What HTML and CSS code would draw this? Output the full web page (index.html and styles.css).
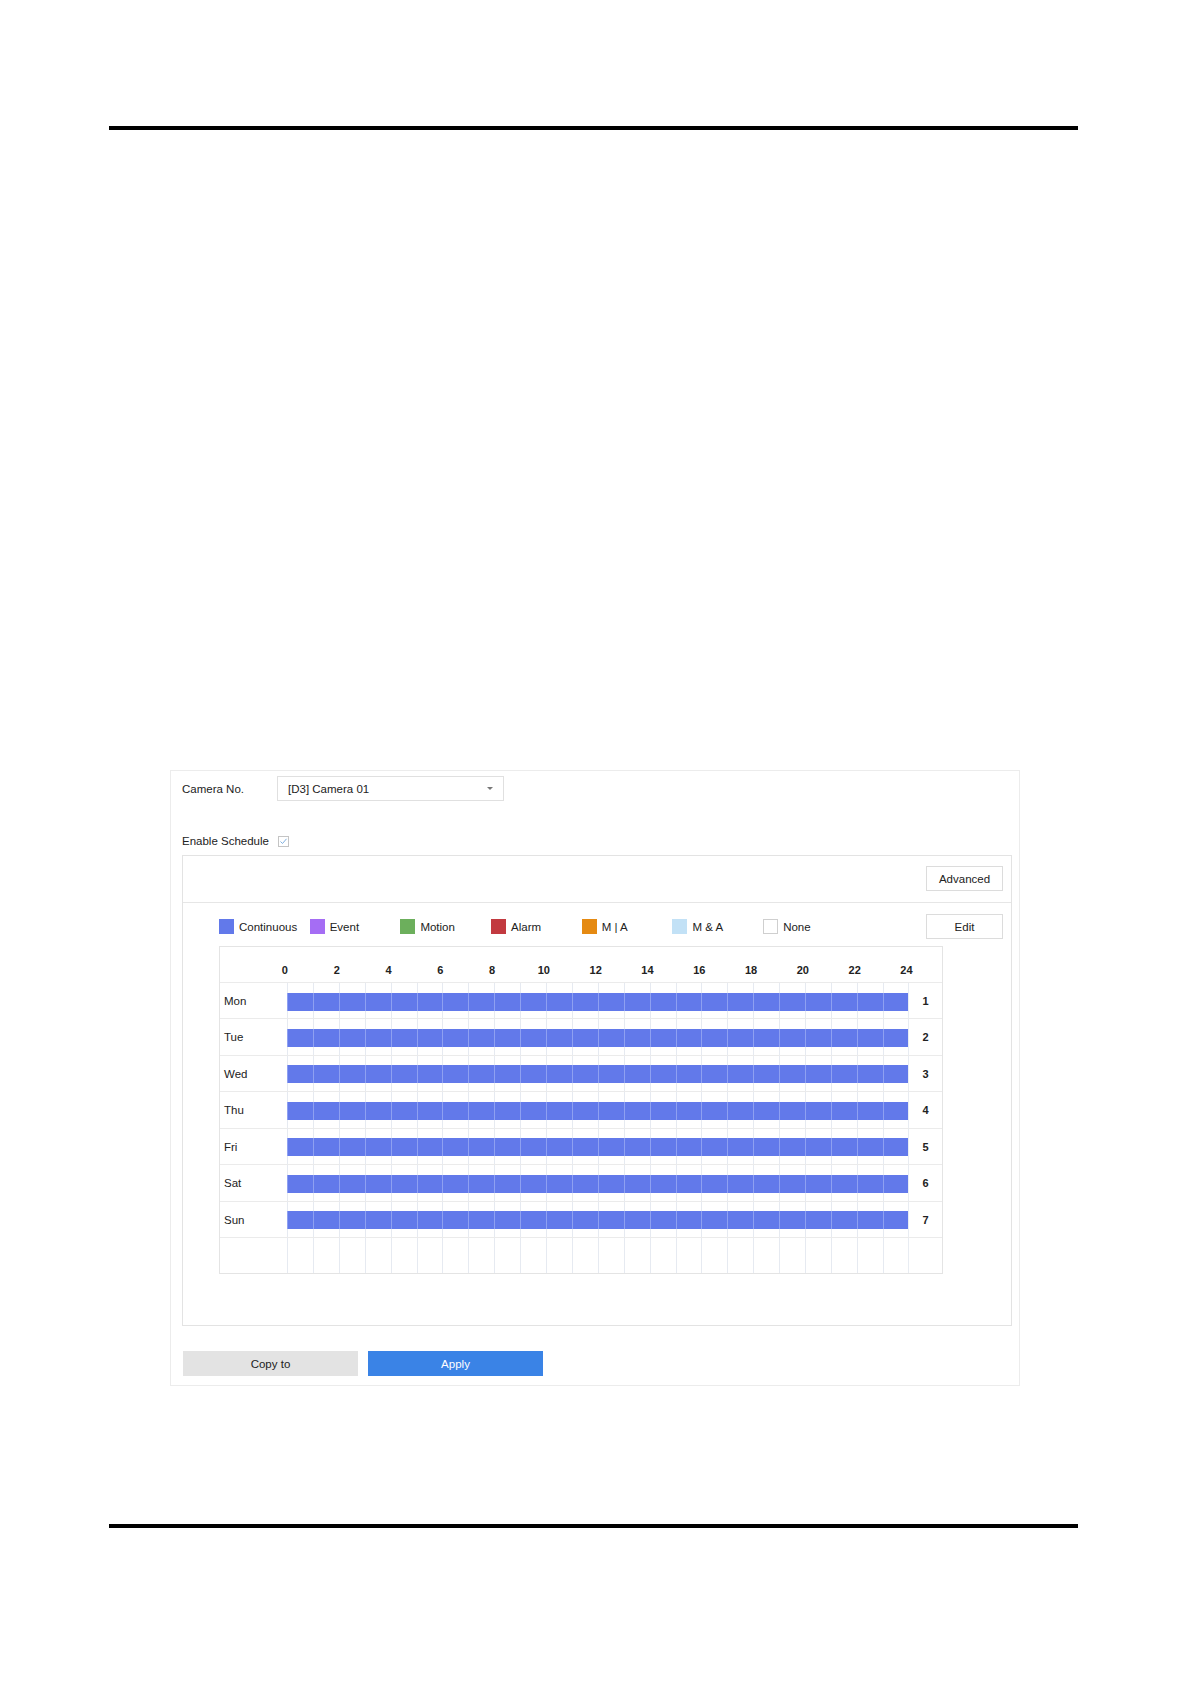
FILE: index.html
```html
<!DOCTYPE html>
<html lang="en">
<head>
<meta charset="UTF-8" />
<title>Record Schedule</title>
<link rel="stylesheet" href="styles.css">
</head>
<body>

<div class="page">
  <div class="rule"></div>

  <div class="panel">
    <div class="cam-row">
      <span class="cam-label">Camera No.</span>
      <div class="select">
        <span>[D3] Camera 01</span>
        <span class="caret"></span>
      </div>
    </div>

    <div class="enable-row">
      <span>Enable Schedule</span>
      <svg class="check" width="11" height="11" viewBox="0 0 11 11">
        <rect x="0.5" y="0.5" width="10" height="10" fill="#fff" stroke="#c4c4c4"/>
        <path d="M2.5 5.5 L4.5 7.5 L8.5 2.8" fill="none" stroke="#7fb0e0" stroke-width="1"/>
      </svg>
    </div>

    <div class="box">
      <div class="box-top">
        <button class="btn">Advanced</button>
      </div>

      <div class="legend-row">
        <div class="legend">
          <div class="lg"><i class="sw c-cont"></i>Continuous</div>
          <div class="lg"><i class="sw c-event"></i>Event</div>
          <div class="lg"><i class="sw c-motion"></i>Motion</div>
          <div class="lg"><i class="sw c-alarm"></i>Alarm</div>
          <div class="lg"><i class="sw c-mora"></i>M | A</div>
          <div class="lg"><i class="sw c-mand"></i>M &amp; A</div>
          <div class="lg"><i class="sw c-none"></i>None</div>
        </div>
        <button class="btn">Edit</button>
      </div>

      <div class="sched">
        <div class="sched-head">
          <span>0</span><span>2</span><span>4</span><span>6</span><span>8</span><span>10</span><span>12</span>
          <span>14</span><span>16</span><span>18</span><span>20</span><span>22</span><span>24</span>
        </div>
        <div class="srow"><div class="day">Mon</div><div class="track"><div class="bar"></div></div><div class="num">1</div></div>
        <div class="srow"><div class="day">Tue</div><div class="track"><div class="bar"></div></div><div class="num">2</div></div>
        <div class="srow"><div class="day">Wed</div><div class="track"><div class="bar"></div></div><div class="num">3</div></div>
        <div class="srow"><div class="day">Thu</div><div class="track"><div class="bar"></div></div><div class="num">4</div></div>
        <div class="srow"><div class="day">Fri</div><div class="track"><div class="bar"></div></div><div class="num">5</div></div>
        <div class="srow"><div class="day">Sat</div><div class="track"><div class="bar"></div></div><div class="num">6</div></div>
        <div class="srow"><div class="day">Sun</div><div class="track"><div class="bar"></div></div><div class="num">7</div></div>
        <div class="srow last"><div class="day"></div><div class="track"></div><div class="num"></div></div>
      </div>
    </div>

    <div class="actions">
      <button class="act copy">Copy to</button>
      <button class="act apply">Apply</button>
    </div>
  </div>

  <div class="rule bottom"></div>
</div>

</body>
</html>
```

FILE: styles.css
```css
* {
  box-sizing: border-box;
  margin: 0; padding: 0;
}
body {
  font-family: 'Liberation Sans', Arial, sans-serif;
  background: #fff;
  color: #222;
  width: 1191px;
  min-height: 1684px;
}
.page {
  padding-top: 126px;
  margin-left: 109px;
  width: 969px;
}
.rule {
  height: 4px;
  background: #000;
}
.rule.bottom {
  margin-top: 138px;
}

/* main panel */
.panel {
  margin-top: 640px;
  margin-left: 61px;
  width: 850px;
  border: 1px solid #ececec;
  padding: 5px 7px 9px 11px;
}
.cam-row {
  display: flex;
  align-items: center;
  height: 25px;
  font-size: 11.5px;
}
.cam-label {
  width: 95px;
}
.select {
  width: 227px;
  height: 25px;
  border: 1px solid #e0e0e0;
  display: flex;
  align-items: center;
  justify-content: space-between;
  padding: 0 10px 0 10px;
  font-size: 11.5px;
}
.caret {
  width: 0; height: 0;
  border-left: 3px solid transparent;
  border-right: 3px solid transparent;
  border-top: 3px solid #777;
  margin-top: -1px;
}
.enable-row {
  display: flex;
  align-items: center;
  gap: 9px;
  height: 14px;
  margin-top: 33px;
  font-size: 11.5px;
}
.check {
  display: block;
}

/* inner box */
.box {
  margin-top: 7px;
  width: 830px;
  height: 471px;
  border: 1px solid #e3e3e3;
}
.box-top {
  height: 47px;
  border-bottom: 1px solid #e6e6e6;
  display: flex;
  justify-content: flex-end;
  align-items: flex-start;
  padding: 10px 8px 0 0;
}
.btn {
  width: 77px;
  height: 25px;
  background: #fff;
  border: 1px solid #dcdcdc;
  font-family: inherit;
  font-size: 11.5px;
  color: #222;
}
.legend-row {
  display: flex;
  align-items: center;
  justify-content: space-between;
  margin-top: 11px;
  padding: 0 8px 0 36px;
}
.legend {
  display: flex;
}
.lg {
  width: 90.7px;
  display: flex;
  align-items: center;
  font-size: 11.5px;
}
.sw {
  width: 15px;
  height: 15px;
  margin-right: 5px;
}
.c-cont { background: #6279ea; }
.c-event { background: #a56df4; }
.c-motion { background: #6caf5c; }
.c-alarm { background: #c23a40; }
.c-mora { background: #e58a12; }
.c-mand { background: #c2e1f6; }
.c-none { background: #fff; border: 1px solid #cfcfcf; }

/* schedule grid */
.sched {
  --hr: 25.9px;
  margin: 7px 0 0 36px;
  width: 724px;
  border: 1px solid #e4e4e4;
}
.sched-head {
  height: 35px;
  display: flex;
  align-items: center;
  padding: 10px 0 0 39px;
  font-size: 11px;
  font-weight: bold;
}
.sched-head span {
  width: calc(var(--hr) * 2);
  text-align: center;
}
.srow {
  display: flex;
  height: 36.45px;
  border-top: 1px solid #ebebeb;
}
.srow.last {
  height: 36px;
}
.day {
  width: 66.7px;
  font-size: 11.5px;
  padding: 12px 0 0 4px;
}
.track {
  width: calc(var(--hr) * 24 + 1px);
  border-right: 1px solid #e8ecf2;
  background: repeating-linear-gradient(90deg, #e6eaf1 0 1px, transparent 1px var(--hr));
}
.bar {
  margin-top: 9.5px;
  height: 18px;
  width: calc(var(--hr) * 24);
  background: repeating-linear-gradient(90deg, #8ea0f1 0 1px, #6279ea 1px var(--hr));
}
.num {
  flex: 1;
  text-align: center;
  font-size: 11px;
  font-weight: bold;
  padding-top: 12px;
}

/* bottom buttons */
.actions {
  display: flex;
  gap: 10px;
  margin-top: 25px;
  padding-left: 1px;
}
.act {
  width: 175px;
  height: 25px;
  border: none;
  font-family: inherit;
  font-size: 11.5px;
}
.copy {
  background: #e3e3e3;
  color: #222;
}
.apply {
  background: #3a83e6;
  color: #fff;
}
```
